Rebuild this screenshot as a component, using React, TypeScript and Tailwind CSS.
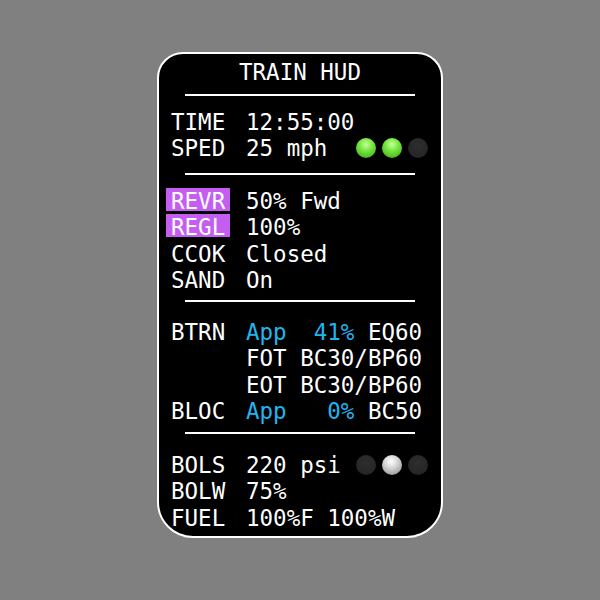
import type { ReactNode } from 'react';

type Light = 'green' | 'off' | 'silver';

const lightClass: Record<Light, string> = {
  green: 'bg-[radial-gradient(circle_at_50%_32%,#c8ff96_0%,#74e63f_40%,#4fb822_80%,#3b8f18_100%)]',
  off: 'bg-[radial-gradient(circle_at_50%_40%,#2e2e2e_0%,#262626_70%,#1c1c1c_100%)]',
  silver: 'bg-[radial-gradient(circle_at_45%_32%,#ffffff_0%,#d9d9d9_35%,#a3a3a3_75%,#6e6e6e_100%)]',
};

function Lights({ states }: { states: Light[] }) {
  return (
    <div className="ml-auto mr-[13px] flex items-center gap-[6px] self-center">
      {states.map((s, i) => (
        <span key={i} className={`block w-[20px] h-[20px] rounded-full ${lightClass[s]}`} />
      ))}
    </div>
  );
}

function Row({ label, highlight, children }: { label?: string; highlight?: boolean; children?: ReactNode }) {
  return (
    <div className="flex h-[26.5px] items-start pl-[7px]">
      <div className={`h-[23px] w-[64px] shrink-0 px-[5px] ${highlight ? 'bg-[#c45ef1]' : ''}`}>{label}</div>
      <div className="ml-[16px] flex flex-1 whitespace-pre">{children}</div>
    </div>
  );
}

const Blue = ({ children }: { children: ReactNode }) => <span className="text-[#1fb6f0]">{children}</span>;

function Divider({ className }: { className: string }) {
  return <div className={`mx-auto h-[2px] w-[230px] bg-white ${className}`} />;
}

export default function App() {
  return (
    <div className="flex h-[600px] w-[600px] justify-center bg-[#808080] pt-[52px]">
      <div
        className="h-[486px] w-[286px] rounded-t-[26px] rounded-b-[36px] border-2 border-white bg-black pt-[5px] text-[22.5px] leading-[26.5px] text-white"
        style={{ fontFamily: '"DejaVu Sans Mono", "Liberation Mono", monospace' }}
      >
        <div className="text-center">TRAIN HUD</div>
        <Divider className="mt-[8px] mb-[13px]" />

        <Row label="TIME">12:55:00</Row>
        <Row label="SPED">
          <span>25 mph</span>
          <Lights states={['green', 'green', 'off']} />
        </Row>
        <Divider className="mt-[11px] mb-[13px]" />

        <Row label="REVR" highlight>50% Fwd</Row>
        <Row label="REGL" highlight>100%</Row>
        <Row label="CCOK">Closed</Row>
        <Row label="SAND">On</Row>
        <Divider className="mt-[6px] mb-[17px]" />

        <Row label="BTRN">
          <Blue>App  41%</Blue> EQ60
        </Row>
        <Row>FOT BC30/BP60</Row>
        <Row>EOT BC30/BP60</Row>
        <Row label="BLOC">
          <Blue>App   0%</Blue> BC50
        </Row>
        <Divider className="mt-[7px] mb-[18px]" />

        <Row label="BOLS">
          <span>220 psi</span>
          <Lights states={['off', 'silver', 'off']} />
        </Row>
        <Row label="BOLW">75%</Row>
        <Row label="FUEL">100%F 100%W</Row>
      </div>
    </div>
  );
}
